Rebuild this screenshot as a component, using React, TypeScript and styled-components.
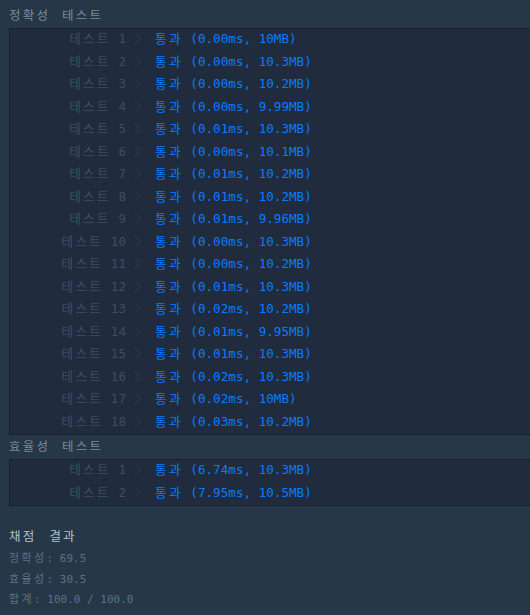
import React from "react";
import styled, { createGlobalStyle } from "styled-components";

const GlobalStyle = createGlobalStyle`
  html, body {
    margin: 0;
    padding: 0;
    background: #263747;
    overflow: hidden;
  }
  body {
    font-family: "DejaVu Sans Mono", "Noto Sans CJK KR", monospace;
  }
`;

const Page = styled.div`
  padding: 4px 0 0 9px;
  min-height: 615px;
  box-sizing: border-box;
  background: #263747;
`;

// hangul glyphs of the fallback font are narrow, widen them to full cells
const Hangul = styled.span<{ $spacing: number }>`
  letter-spacing: ${(p) => p.$spacing}px;
`;

const SectionTitle = styled.div`
  display: flex;
  gap: 12px;
  height: 24px;
  line-height: 23px;
  font-size: 12.5px;
  color: #7a8b99;
`;

const ResultBox = styled.div`
  background: #202b3d;
  border: 1px solid #172131;
  border-right: none;
`;

const Row = styled.div`
  display: grid;
  grid-template-columns: 116px 29px 1fr;
  height: 22.5px;
  box-sizing: border-box;
  padding-top: 2px;
  align-items: start;
  font-size: 12.6px;
  line-height: 15px;
  white-space: pre;
`;

const Label = styled.span`
  text-align: right;
  color: #3e4e60;
`;

const Chevron = styled.span`
  display: flex;
  align-items: center;
  height: 15px;
  padding-left: 8px;
  color: #2f3e52;
`;

const Passed = styled.span`
  color: #0a7bff;
`;

const Summary = styled.div`
  margin-top: 21px;
`;

const SummaryTitle = styled.div`
  display: flex;
  gap: 13px;
  font-size: 12.5px;
  color: #b3c0cc;
  height: 22px;
  line-height: 20px;
`;

const SummaryLine = styled.div`
  font-size: 11px;
  color: #5a7388;
  height: 20.5px;
  line-height: 20px;
  white-space: pre;
`;

type Result = { ms: string; mem: string };

const accuracy: Result[] = [
  { ms: "0.00", mem: "10MB" },
  { ms: "0.00", mem: "10.3MB" },
  { ms: "0.00", mem: "10.2MB" },
  { ms: "0.00", mem: "9.99MB" },
  { ms: "0.01", mem: "10.3MB" },
  { ms: "0.00", mem: "10.1MB" },
  { ms: "0.01", mem: "10.2MB" },
  { ms: "0.01", mem: "10.2MB" },
  { ms: "0.01", mem: "9.96MB" },
  { ms: "0.00", mem: "10.3MB" },
  { ms: "0.00", mem: "10.2MB" },
  { ms: "0.01", mem: "10.3MB" },
  { ms: "0.02", mem: "10.2MB" },
  { ms: "0.01", mem: "9.95MB" },
  { ms: "0.01", mem: "10.3MB" },
  { ms: "0.02", mem: "10.3MB" },
  { ms: "0.02", mem: "10MB" },
  { ms: "0.03", mem: "10.2MB" },
];

const efficiency: Result[] = [
  { ms: "6.74", mem: "10.3MB" },
  { ms: "7.95", mem: "10.5MB" },
];

const ArrowIcon = () => (
  <svg width="7" height="13" viewBox="0 0 7 13" fill="none">
    <path d="M1 1l5 5.5L1 12" stroke="currentColor" strokeWidth="1" />
  </svg>
);

const ResultList = ({ results }: { results: Result[] }) => (
  <ResultBox>
    {results.map((r, i) => (
      <Row key={i}>
        <Label>
          <Hangul $spacing={2.3}>테스트</Hangul> {i + 1}
        </Label>
        <Chevron>
          <ArrowIcon />
        </Chevron>
        <Passed>
          <Hangul $spacing={2.3}>통과</Hangul> ({r.ms}ms, {r.mem})
        </Passed>
      </Row>
    ))}
  </ResultBox>
);

const Score = ({ name, value }: { name: string; value: string }) => (
  <SummaryLine>
    <Hangul $spacing={2.4}>{name}</Hangul>: {value}
  </SummaryLine>
);

export default function App() {
  return (
    <Page>
      <GlobalStyle />
      <SectionTitle>
        <Hangul $spacing={2.2}>정확성</Hangul>
        <Hangul $spacing={2.2}>테스트</Hangul>
      </SectionTitle>
      <ResultList results={accuracy} />
      <SectionTitle>
        <Hangul $spacing={2.2}>효율성</Hangul>
        <Hangul $spacing={2.2}>테스트</Hangul>
      </SectionTitle>
      <ResultList results={efficiency} />
      <Summary>
        <SummaryTitle>
          <Hangul $spacing={2.2}>채점</Hangul>
          <Hangul $spacing={2.2}>결과</Hangul>
        </SummaryTitle>
        <Score name="정확성" value="69.5" />
        <Score name="효율성" value="30.5" />
        <Score name="합계" value="100.0 / 100.0" />
      </Summary>
    </Page>
  );
}
